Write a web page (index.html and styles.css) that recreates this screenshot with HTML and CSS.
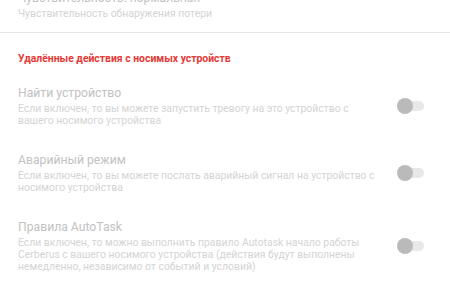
FILE: index.html
```html
<!DOCTYPE html>
<html lang="ru">

<head>
    <meta charset="UTF-8">
    <meta name="viewport" content="width=device-width, initial-scale=1.0">
    <title>Настройки</title>
    <link rel="stylesheet" href="styles.css">
</head>

<body>

    <div class="settings">
        <!-- обрезанный сверху пункт -->
        <div class="item item-top">
            <div class="text">
                <div class="title">Чувствительность: нормальная</div>
                <div class="summary">Чувствительность обнаружения потери</div>
            </div>
        </div>

        <div class="divider"></div>

        <div class="category">Удалённые действия с носимых устройств</div>

        <div class="item">
            <div class="text">
                <div class="title">Найти устройство</div>
                <div class="summary">Если включен, то вы можете запустить тревогу на это устройство с вашего носимого устройства</div>
            </div>
            <div class="switch"><span class="track"></span><span class="thumb"></span></div>
        </div>

        <div class="item">
            <div class="text">
                <div class="title">Аварийный режим</div>
                <div class="summary">Если включен, то вы можете послать аварийный сигнал на устройство с носимого устройства</div>
            </div>
            <div class="switch"><span class="track"></span><span class="thumb"></span></div>
        </div>

        <div class="item">
            <div class="text">
                <div class="title">Правила AutoTask</div>
                <div class="summary">Если включен, то можно выполнить правило Autotask начало работы Cerberus с вашего носимого устройства (действия будут выполнены немедленно, независимо от событий и условий)</div>
            </div>
            <div class="switch"><span class="track"></span><span class="thumb"></span></div>
        </div>
    </div>

</body>

</html>
```

FILE: styles.css
```css
* {
    padding: 0;
    margin: 0;
    box-sizing: border-box;
}

body {
    background-color: #fff;
    font-family: Roboto, "Noto Sans", sans-serif;
    overflow: hidden;
}

.settings {
    width: 450px;
}

.item {
    display: flex;
    align-items: center;
    padding: 12px 26px 12px 18px;
}

.item-top {
    margin-top: -23px;
}

.item .text {
    flex: 1;
    padding-right: 12px;
}

.title {
    font-size: 12.2px;
    line-height: 18px;
    color: #c2c2c2;
    margin-bottom: 1px;
}

.summary {
    font-size: 10.4px;
    line-height: 12px;
    color: #d4d4d4;
}

.divider {
    height: 1px;
    background-color: #e6e6e6;
}

.category {
    padding: 20px 18px 7px;
    font-size: 10.4px;
    line-height: 12px;
    font-weight: bold;
    color: #e53935;
}

/* выключатель */
.switch {
    width: 27px;
    height: 16px;
    position: relative;
    flex-shrink: 0;
}

.switch .track {
    position: absolute;
    left: 6px;
    top: 3px;
    width: 21px;
    height: 10px;
    border-radius: 5px;
    background-color: #e8e8e8;
}

.switch .thumb {
    position: absolute;
    left: 0;
    top: 0;
    width: 16px;
    height: 16px;
    border-radius: 50%;
    background-color: #bababa;
}
```
